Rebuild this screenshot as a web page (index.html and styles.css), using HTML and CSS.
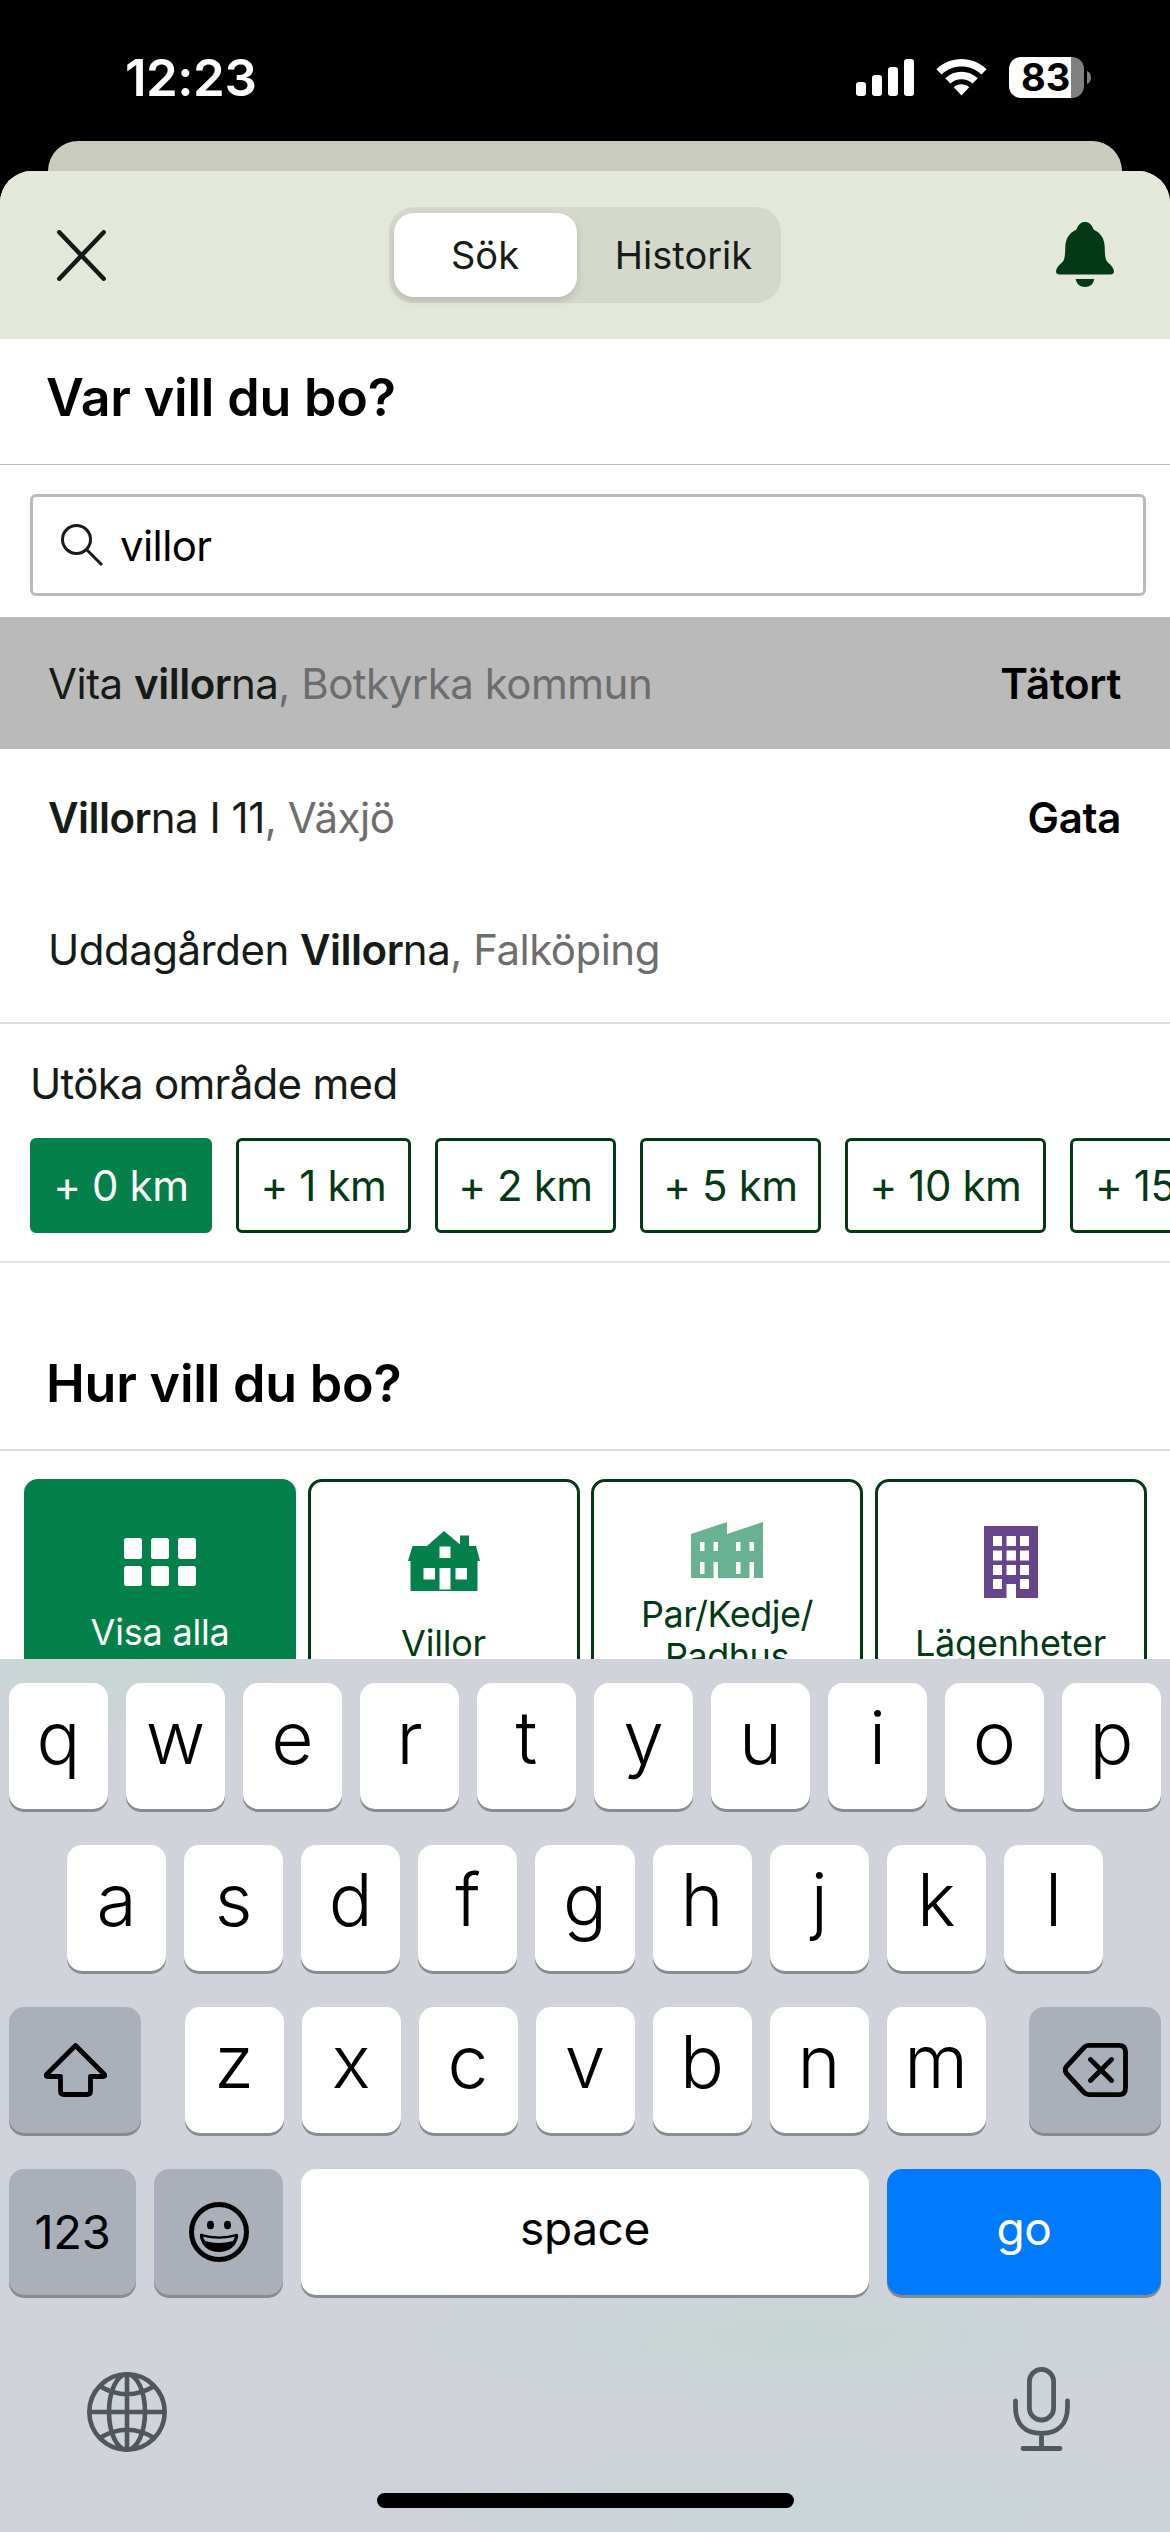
FILE: index.html
```html
<!DOCTYPE html>
<html lang="sv">
<head>
<meta charset="utf-8">
<title>Sök bostad</title>
<link rel="stylesheet" href="styles.css">
</head>
<body>
<div class="phone">
  <header class="status">
    <span class="time">12:23</span>
    <div class="status-icons">
      <svg class="signal" viewBox="0 0 58 37" fill="#fff"><rect y="23" width="10" height="14" rx="3"/><rect x="16" y="16" width="10" height="21" rx="3"/><rect x="32" y="8" width="10" height="29" rx="3"/><rect x="48" width="10" height="37" rx="3"/></svg>
      <svg class="wifi" viewBox="0 0 51 37" fill="#fff"><path d="M.4 10.2C14.5-3.4 36.500-3.400 50.600 10.200L45.400 15.500C34.300 4.900 16.700 4.900 5.600 15.500Z"/><path d="M9.200 19.200C18.300 10.600 32.700 10.600 41.800 19.200L36.600 24.500C30.400 18.800 20.600 18.800 14.400 24.500Z"/><path d="M17.800 28.200C22.200 24.400 28.800 24.400 33.200 28.200L25.500 36.400Z"/></svg>
      <div class="battery"><span class="battery-level">83</span></div>
      <svg class="battery-cap" viewBox="0 0 4 13"><path d="M0 0C5.300 2 5.300 11 0 13Z" fill="#808080"/></svg>
    </div>
  </header>
  <div class="sheet-behind"></div>
  <main class="sheet">
    <nav class="topbar">
      <svg class="close" viewBox="0 0 49 51" fill="none" stroke="#171b18" stroke-width="4.500" stroke-linecap="round"><path d="M2.300 2.300 46.700 48.700M46.700 2.300 2.300 48.700"/></svg>
      <div class="segments"><span class="segment selected">Sök</span><span class="segment other">Historik</span></div>
      <svg class="bell" viewBox="0 0 58 65" fill="#033a16"><path d="M20.500 7.500C22 2.500 25 0 29 0S36 2.500 37.500 7.500C45 11 48.500 17 48.700 25C49 33 49 38 52 40.500C55.500 43.500 58 46.500 58 49.500C58 51.500 56.500 52.500 54.500 52.500H3.500C1.500 52.500 0 51.500 0 49.500C0 46.500 2.500 43.500 6 40.500C9 38 9 33 9.300 25C9.500 17 13 11 20.500 7.500Z"/><path d="M19.700 57H38.300C37.500 62 34 65 29 65S20.500 62 19.700 57Z"/></svg>
    </nav>
    <h1 class="heading first">Var vill du bo?</h1>
    <div class="search">
      <svg class="magnifier" viewBox="0 0 42 42" fill="none" stroke="#171b18" stroke-width="3"><circle cx="15.500" cy="15.500" r="14"/><path d="M25.500 25.500 41 41"/></svg>
      <span class="query">villor</span>
    </div>
    <ul class="results">
      <li class="result active"><span>Vita <b>villor</b>na<i>, Botkyrka kommun</i></span><strong>Tätort</strong></li>
      <li class="result"><span><b>Villor</b>na I 11<i>, Växjö</i></span><strong>Gata</strong></li>
      <li class="result"><span>Uddagården <b>Villor</b>na<i>, Falköping</i></span></li>
    </ul>
    <section class="extend">
      <p class="extend-label">Utöka område med</p>
      <div class="chips">
        <span class="chip chosen">+ 0 km</span><span class="chip narrow">+ 1 km</span><span class="chip">+ 2 km</span><span class="chip">+ 5 km</span><span class="chip wide">+ 10 km</span><span class="chip wide">+ 15 km</span>
      </div>
    </section>
    <h2 class="heading second">Hur vill du bo?</h2>
    <div class="types">
      <div class="type all">
        <svg class="ico-grid" viewBox="0 0 72 48" fill="#fff"><rect width="18" height="21" rx="2.500"/><rect x="27" width="18" height="21" rx="2.500"/><rect x="54" width="18" height="21" rx="2.500"/><rect y="28" width="18" height="20" rx="2.500"/><rect x="27" y="28" width="18" height="20" rx="2.500"/><rect x="54" y="28" width="18" height="20" rx="2.500"/></svg>
        <span>Visa alla</span>
      </div>
      <div class="type house">
        <svg class="ico-house" viewBox="0 0 72 60" fill="#04804a" fill-rule="evenodd"><path d="M36 0 52 13.500V4.500H61V15H68L72 30H69.500V60H2.500V30H0L4.500 15H19ZM31.500 15.500V27H42.500V15.500ZM15.500 37V48.500H27V37ZM47.500 37V48.500H59V37ZM31.500 37V58.500H42.500V37Z"/></svg>
        <span>Villor</span>
      </div>
      <div class="type row">
        <svg class="ico-row" viewBox="0 0 72 56" fill="#69b193" fill-rule="evenodd"><path d="M0 12 36 0V12L72 0V56H63V40H58.500V56H27V40H22.500V56H0ZM9 20V29H13.500V20ZM22.500 20V29H27V20ZM45 20V29H49.500V20ZM58.500 20V29H63V20ZM9 40V52H13.500V40ZM45 40V52H49.500V40Z"/></svg>
        <span>Par/Kedje/<br>Radhus</span>
      </div>
      <div class="type flats">
        <svg class="ico-flats" viewBox="0 0 54 72" fill="#67458b" fill-rule="evenodd"><path d="M0 0H54V72H32V58H22.500V72H0ZM9 10V20H18V10ZM22.500 10V20H32V10ZM36 10V20H45V10ZM9 24.500V34.500H18V24.500ZM22.500 24.500V34.500H32V24.500ZM36 24.500V34.500H45V24.500ZM9 39V49H18V39ZM22.500 39V49H32V39ZM36 39V49H45V39ZM9 53V63H18V53ZM36 53V63H45V53Z"/></svg>
        <span>Lägenheter</span>
      </div>
    </div>
  </main>
  <section class="keyboard">
    <div class="keys"><kbd>q</kbd><kbd>w</kbd><kbd>e</kbd><kbd>r</kbd><kbd>t</kbd><kbd>y</kbd><kbd>u</kbd><kbd>i</kbd><kbd>o</kbd><kbd>p</kbd></div>
    <div class="keys middle"><kbd>a</kbd><kbd>s</kbd><kbd>d</kbd><kbd>f</kbd><kbd>g</kbd><kbd>h</kbd><kbd>j</kbd><kbd>k</kbd><kbd>l</kbd></div>
    <div class="keys third">
      <kbd class="dark side"><svg class="shift" viewBox="0 0 63 54" fill="none" stroke="#000" stroke-width="4.800" stroke-linejoin="round"><path d="M31.500 2.500 60.500 31.500Q61.500 33.500 59 33.500H46.500V48Q46.500 51.500 43 51.500H20Q16.500 51.500 16.500 48V33.500H4Q1.500 33.500 2.500 31.500Z"/></svg></kbd>
      <div class="letters"><kbd>z</kbd><kbd>x</kbd><kbd>c</kbd><kbd>v</kbd><kbd>b</kbd><kbd>n</kbd><kbd>m</kbd></div>
      <kbd class="dark side"><svg class="erase" viewBox="0 0 65 54" fill="none" stroke="#000" stroke-width="4.800" stroke-linejoin="round" stroke-linecap="round"><path d="M26 2.400H56Q62.500 2.400 62.500 9V45Q62.500 51.600 56 51.600H26Q23 51.600 21 49.500L3.500 30.500Q1 27 3.500 23.500L21 4.500Q23 2.400 26 2.400ZM27.500 16.500 48.500 37.500M48.500 16.500 27.500 37.500"/></svg></kbd>
    </div>
    <div class="keys">
      <kbd class="dark num">123</kbd>
      <kbd class="dark emoji"><svg class="smile" viewBox="0 0 60 60"><circle cx="30" cy="30" r="27.500" fill="none" stroke="#000" stroke-width="5"/><ellipse cx="21.500" cy="23" rx="3.500" ry="4.300"/><ellipse cx="38.500" cy="23" rx="3.500" ry="4.300"/><path d="M12 31.800Q30 37 48 31.800Q49.500 32 49 35.500C47 45 39.500 50 30 50S13 45 11 35.500Q10.500 32 12 31.800Z"/><path d="M14 34.800Q30 38.800 46 34.800L44 39Q30 43 16 39Z" fill="#aab1bb"/></svg></kbd>
      <kbd class="space">space</kbd>
      <kbd class="go">go</kbd>
    </div>
    <div class="tools">
      <svg class="globe" viewBox="0 0 80 80" fill="none" stroke="#50565e" stroke-width="4.600"><circle cx="40" cy="40" r="37.700"/><ellipse cx="40" cy="40" rx="18" ry="37.700"/><path d="M40 2V78M2 40H78M12.500 14Q40 30.500 67.500 14M12.500 66Q40 49.500 67.500 66"/></svg>
      <svg class="mic" viewBox="0 0 57 84" fill="none" stroke="#50595e" stroke-width="4.800" stroke-linecap="round"><rect x="16.400" y="2.400" width="24.200" height="50.600" rx="12.100"/><path d="M2.500 34V40C2.500 57 12 66.300 28.500 66.300S54.500 57 54.500 40V34M28.500 67V80M10 81.500H47"/></svg>
    </div>
    <div class="home"></div>
  </section>
</div>
</body>
</html>
```
FILE: styles.css
```css
* { box-sizing: border-box; }
body { margin: 0; background: #000; font-family: Inter, "Liberation Sans", sans-serif; }
svg { display: block; flex: none; }
.phone { width: 1170px; height: 2532px; overflow: hidden; display: flex; flex-direction: column; color: #171b18; }

.status { height: 141px; flex: none; display: flex; justify-content: space-between; padding: 57px 79px 0 125px; color: #fff; }
.time { font-size: 51px; font-weight: 600; line-height: 42px; letter-spacing: -.5px; }
.status-icons { display: flex; align-items: flex-start; }
.signal { width: 58px; height: 37px; margin-top: 2px; }
.wifi { width: 51px; height: 37px; margin: 2px 22px 0; }
.battery { width: 75px; height: 41px; border-radius: 12px; background: linear-gradient(90deg, #fff 62px, #808080 62px); }
.battery-level { display: block; padding-left: 12px; font-size: 38px; line-height: 41px; font-weight: 700; color: #000; }
.battery-cap { width: 4px; height: 13px; margin: 14px 0 0 3px; }

.sheet-behind { flex: none; height: 30px; margin: 0 48px; border-radius: 30px 30px 0 0; background: #c8cbbe; }
.sheet { flex: none; height: 1488px; overflow: hidden; border-radius: 32px 32px 0 0; background: #fff; }
.topbar { height: 168px; padding: 36px 56px 0 57px; display: flex; justify-content: space-between; align-items: flex-start; background: #e4e8da; }
.close { width: 49px; height: 51px; margin-top: 23px; }
.segments { width: 392px; height: 96px; padding: 6px 5px; margin-right: -7px; display: flex; border-radius: 25px; background: #d5d9cc; }
.segment { flex: 1; display: flex; align-items: center; justify-content: center; font-size: 38px; }
.segment.selected { flex: none; width: 183px; border-radius: 20px; background: #fff; box-shadow: 0 4px 8px rgba(0, 0, 0, .14); }
.segment.other { padding-left: 15px; }
.bell { width: 58px; height: 65px; margin-top: 15px; }

.heading { margin: 0; padding-left: 46px; font-size: 52px; font-weight: 600; letter-spacing: -.2px; color: #000; }
.first { height: 126px; line-height: 118px; border-bottom: 1px solid #bababa; }
.second { height: 188px; line-height: 64px; padding-top: 89px; border-bottom: 2px solid #dadcdc; }

.search { display: flex; align-items: center; width: 1116px; height: 102px; margin: 29px 0 21px 30px; padding-left: 28px; border: 3px solid #bababa; border-radius: 6px; }
.magnifier { width: 42px; height: 42px; }
.query { margin-left: 17px; font-size: 42px; letter-spacing: -.6px; color: #000; }

.results { height: 407px; margin: 0; padding: 0; list-style: none; border-bottom: 2px solid #dadcdc; }
.result { height: 137px; padding: 0 49px 0 48px; display: flex; justify-content: space-between; align-items: center; font-size: 42px; letter-spacing: -.5px; }
.result.active { height: 132px; background: #bababa; }
.result:last-child { height: 127px; }
.result b, .result strong { font-weight: 600; }
.result strong { letter-spacing: -.3px; color: #000; }
.result i { font-style: normal; color: #6d6d6d; }

.extend { height: 239px; padding: 34px 0 0 30px; border-bottom: 2px solid #e2e4e4; }
.extend-label { margin: 0; height: 80px; font-size: 42px; line-height: 52px; letter-spacing: -.7px; }
.chips { display: flex; gap: 24px; }
.chip { flex: none; width: 181px; height: 95px; display: flex; align-items: center; justify-content: center; border: 3px solid #033a16; border-radius: 6px; font-size: 42px; letter-spacing: -.4px; color: #033a16; }
.chosen { width: 182px; border-color: #04804a; background: #04804a; color: #fff; }
.narrow { width: 175px; }
.wide { width: 201px; }

.types { display: grid; grid-template-columns: repeat(4, 272px); gap: 11.500px; padding: 28px 0 0 24px; }
.type { height: 260px; display: flex; flex-direction: column; align-items: center; border: 3px solid #033a16; border-radius: 14px; font-size: 36px; line-height: 42px; letter-spacing: -.2px; color: #033a16; text-align: center; }
.all { border-color: #04804a; background: #04804a; color: #fff; padding-top: 56px; }
.house { padding-top: 49px; }
.row { padding-top: 40px; letter-spacing: -.5px; }
.flats { padding-top: 44px; }
.ico-grid { width: 72px; height: 48px; margin-bottom: 25px; }
.ico-house { width: 72px; height: 60px; margin-bottom: 31px; }
.ico-row { width: 72px; height: 56px; margin-bottom: 15px; }
.ico-flats { width: 54px; height: 72px; margin-bottom: 24px; }

.keyboard { flex: none; height: 873px; padding: 24px 9px 0; display: flex; flex-direction: column; gap: 36px; background: radial-gradient(ellipse 460px 90px at 800px 680px, #c7d5d4, transparent), radial-gradient(ellipse 500px 90px at 850px 850px, #cad6d7, transparent), radial-gradient(ellipse 260px 90px at 110px 0, #c8d6d4, transparent), #d0d3da; }
.keys { flex: none; display: flex; gap: 18px; height: 126px; }
.middle { padding: 0 58px; }
.third { justify-content: space-between; }
.letters { display: flex; gap: 18px; width: 801px; }
kbd { flex: 1; height: 126px; display: flex; align-items: center; justify-content: center; border-radius: 15px; background: #fff; box-shadow: 0 3px 0 #898b8f; font: 340 73px/110px Inter, sans-serif; color: #000; padding-bottom: 17px; }
kbd.dark { background: #aab0ba; padding: 0; }
kbd.side { flex: none; width: 132px; }
.shift { width: 63px; height: 54px; }
.erase { width: 65px; height: 54px; }
kbd.num { flex: none; width: 127px; font-size: 47px; font-weight: 400; letter-spacing: -.3px; }
kbd.emoji { flex: none; width: 129px; }
.smile { width: 60px; height: 60px; }
kbd.space, kbd.go { font-size: 46px; font-weight: 400; letter-spacing: -.4px; padding-bottom: 9px; }
kbd.space { flex: none; width: 568px; }
kbd.go { background: #007aff; color: #fff; }
.tools { display: flex; justify-content: space-between; padding: 36px 91px 0 78px; height: 121px; }
.globe { width: 80px; height: 80px; margin-top: 5px; }
.mic { width: 57px; height: 84px; }
.home { width: 417px; height: 15px; margin: 5px auto 0; border-radius: 8px; background: #000; }
```
